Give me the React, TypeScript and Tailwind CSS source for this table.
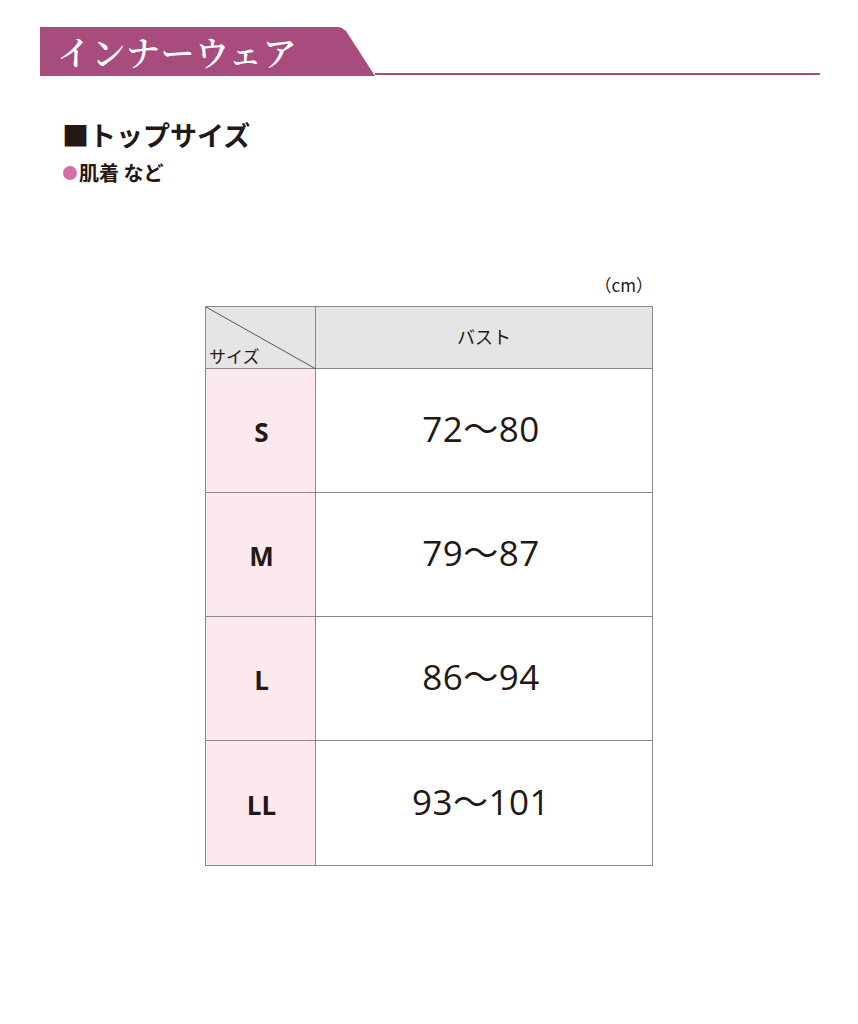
import React from 'react';

const rows = [
  { size: 'S', bust: '72〜80' },
  { size: 'M', bust: '79〜87' },
  { size: 'L', bust: '86〜94' },
  { size: 'LL', bust: '93〜101' },
];

const jp = "font-['Noto_Sans_CJK_JP','Noto_Sans',sans-serif]";

export default function App() {
  return (
    <div className={`w-[858px] h-[1024px] bg-white text-[#231815] ${jp}`}>
      {/* Section banner */}
      <div className="flex items-end pt-[27px] pl-[40px] pr-[38px]">
        <div className="w-[335px] h-[49px] shrink-0 bg-[#a84b7d] rounded-tr-[8px] [clip-path:polygon(0_0,298px_0,302px_1px,306px_4px,335px_49px,0_49px)] flex items-center pl-[17px]">
          <span className="text-white text-[34px] leading-none tracking-[0.5px] font-['Noto_Serif_CJK_JP','Liberation_Serif','Noto_Sans_CJK_JP',serif] font-semibold">
            インナーウェア
          </span>
        </div>
        <div className="flex-1 h-[2px] mb-[1px] bg-[#a84b7d]" />
      </div>

      {/* Heading */}
      <div className="pl-[62px] pt-[42px]">
        <div className="text-[27px] leading-[34px] font-bold">■トップサイズ</div>
        <div className="flex items-center mt-[8px] text-[20px] leading-[25px] font-bold">
          <span className="w-[14px] h-[14px] rounded-full bg-[#d36fa7] mr-[2px] ml-[1px]" />
          <span>肌着 など</span>
        </div>
      </div>

      {/* Table */}
      <div className="w-[448px] ml-[205px] mt-[89px]">
        <div className="text-right text-[17px] leading-[22px] mb-[10px]">（cm）</div>
        <div className="border border-[#898989]">
          <div className="flex h-[62px] bg-[#e5e5e5] border-b border-[#898989]">
            <div className="relative w-[110px] border-r border-[#898989]">
              <svg className="absolute inset-0" width="110" height="62" viewBox="0 0 110 62">
                <line x1="0" y1="0" x2="110" y2="62" stroke="#555" strokeWidth="1" />
              </svg>
              <span className="absolute left-[3px] bottom-[4px] text-[17px] leading-none">サイズ</span>
            </div>
            <div className="flex-1 flex items-center justify-center text-[18px] -mt-[3px]">バスト</div>
          </div>
          {rows.map((r, i) => (
            <div key={r.size} className={`flex h-[124px] ${i < rows.length - 1 ? 'border-b border-[#898989]' : ''}`}>
              <div className="w-[110px] bg-[#fbe9ee] border-r border-[#898989] flex items-center justify-center text-[26px] font-bold font-['Open_Sans','Noto_Sans',sans-serif] pt-[4px] pl-[2px]">
                {r.size}
              </div>
              <div className="flex-1 flex items-center justify-center text-[35px] font-['Open_Sans','Noto_Sans_CJK_JP',sans-serif] tracking-[0.5px] -mt-[2px] pr-[6px]">
                {r.bust}
              </div>
            </div>
          ))}
        </div>
      </div>
    </div>
  );
}
